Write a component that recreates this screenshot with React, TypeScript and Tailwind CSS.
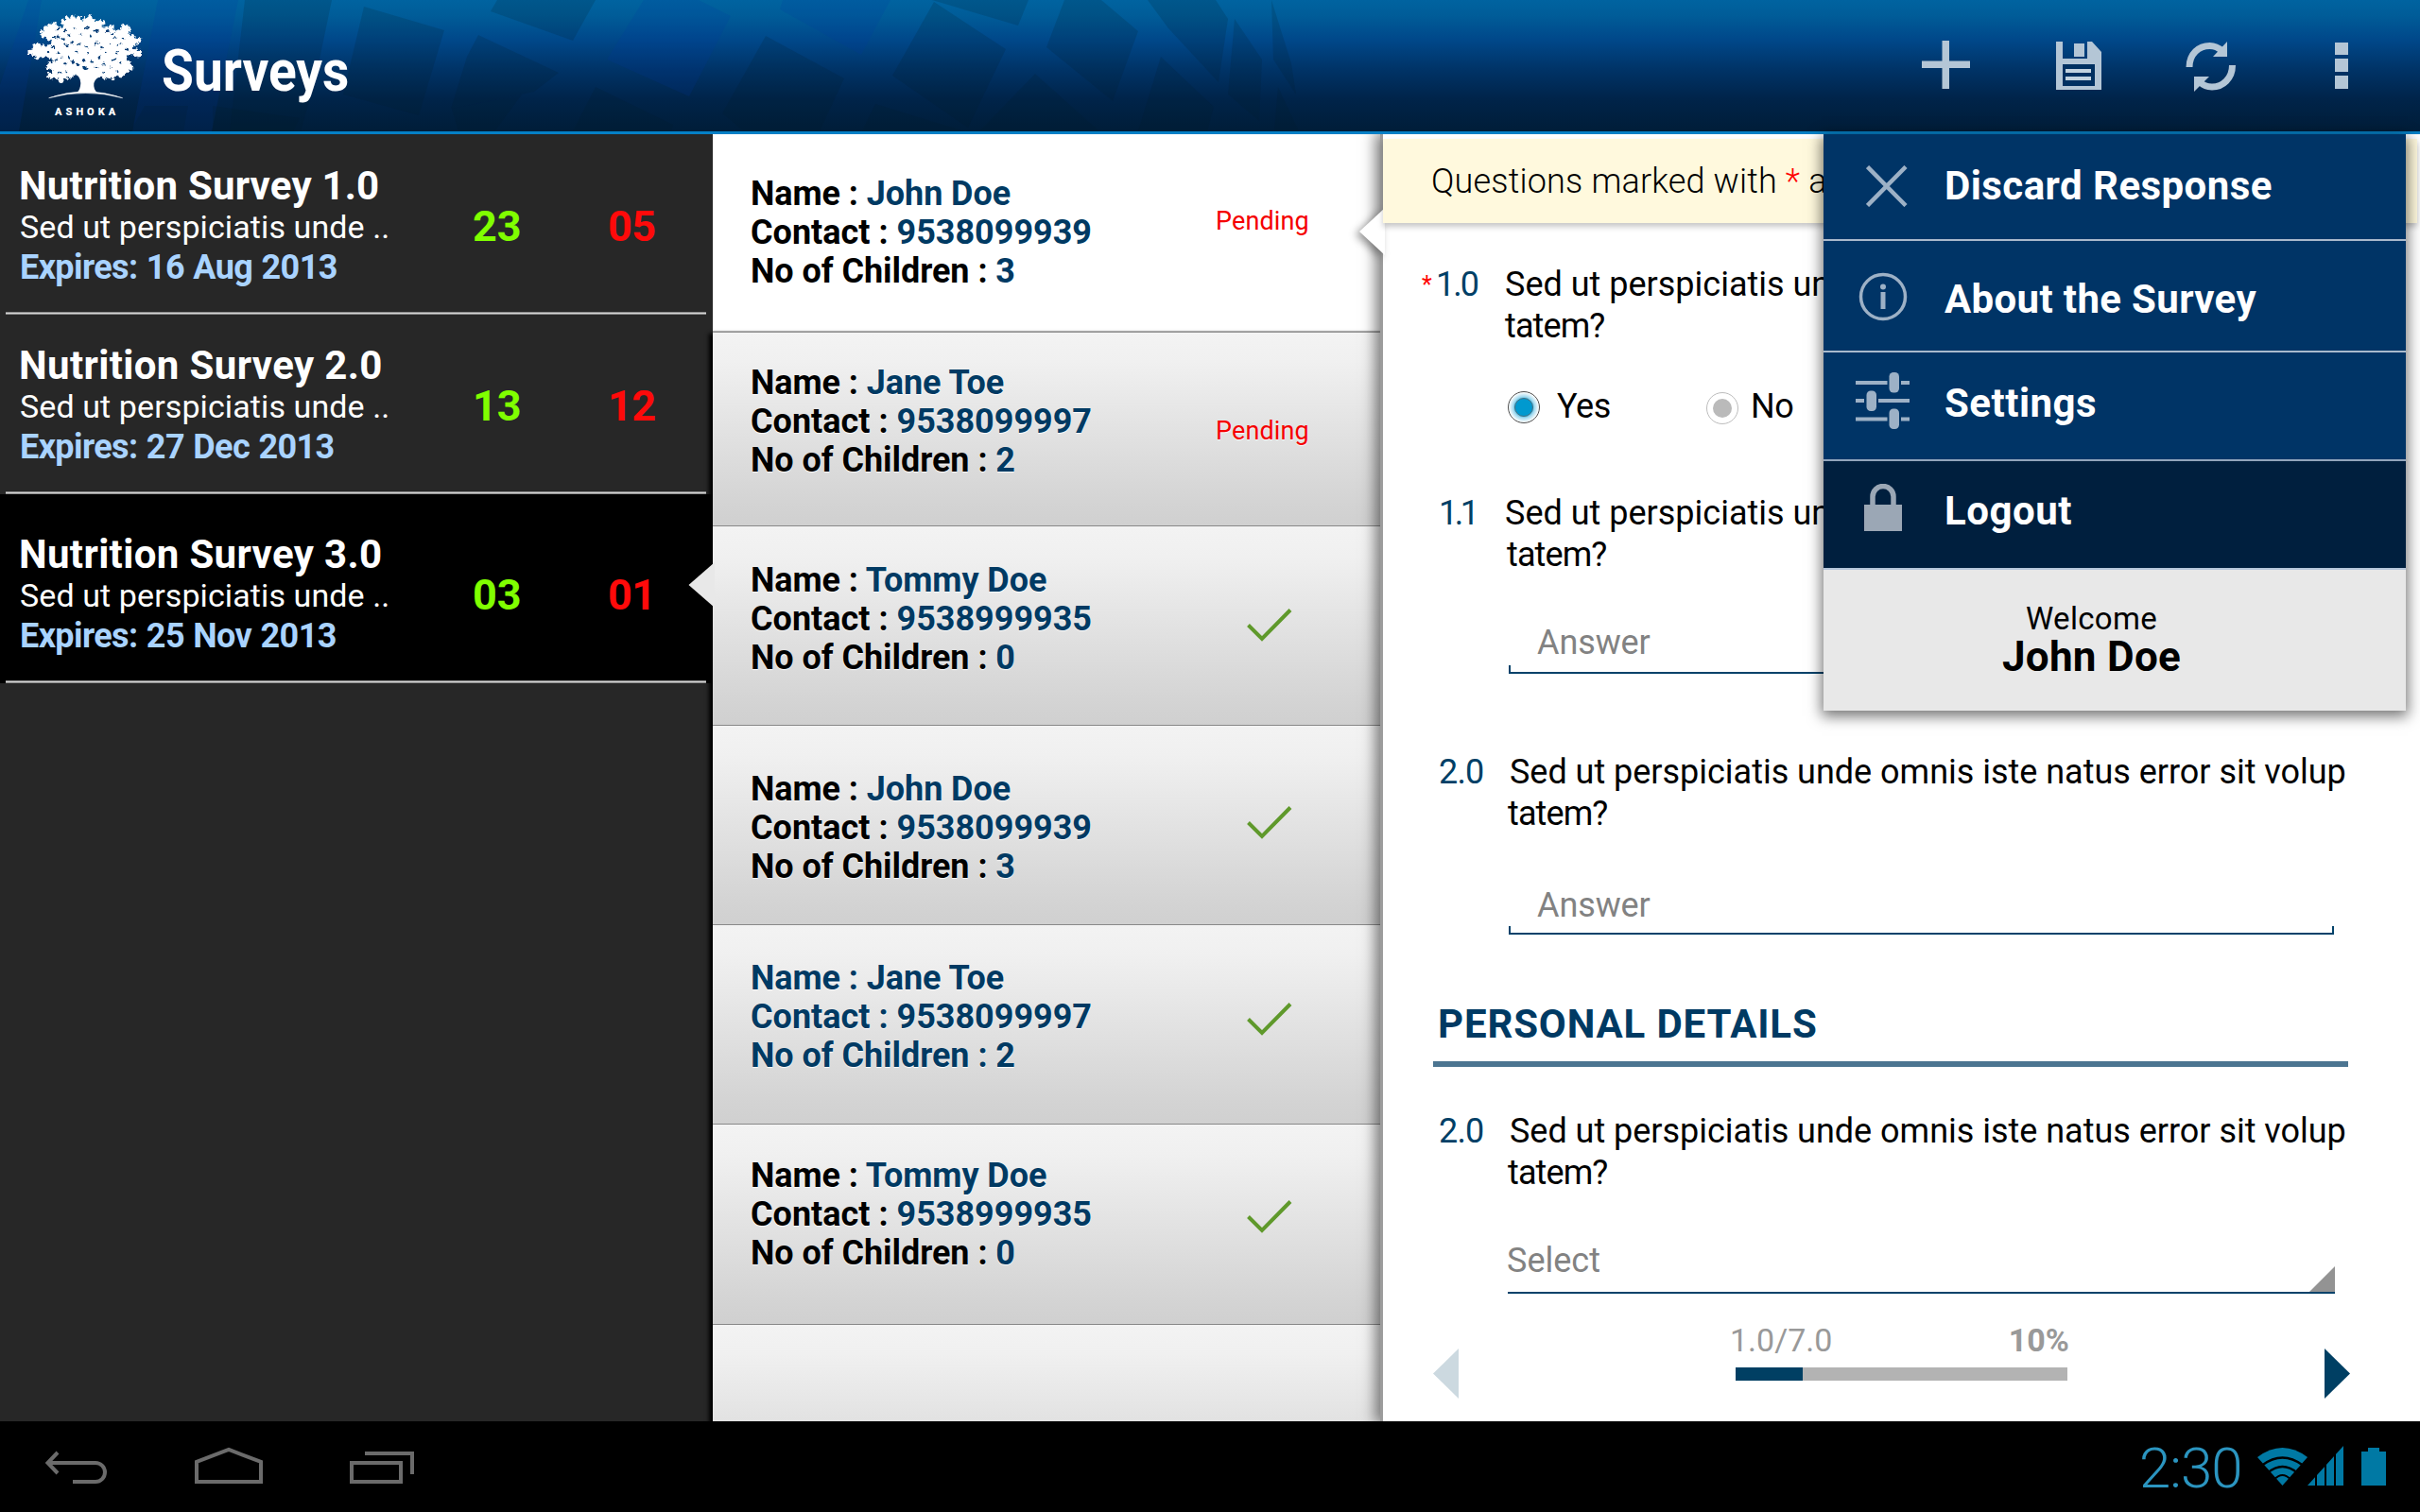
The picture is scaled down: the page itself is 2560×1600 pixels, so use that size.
import type { ReactNode } from "react";

const PATTERN_DARK = [
  "153,112 199,112 194,139 138,139",
  "225,112 317,125 310,139 225,139",
  "259,0 351,0 334,82 318,139 243,139",
  "385,7 470,32 443,122 363,100",
  "526,0 630,0 606,43 519,12",
  "506,37 591,77 565,97 477,115 494,60",
  "478,115 552,100 523,139 485,139",
  "630,92 712,132 710,139 606,139",
  "810,38 893,83 867,139 787,139 764,120",
  "988,2 1064,52 1024,135 944,80",
  "986,0 1088,0 1077,27",
  "1126,0 1165,0 1204,33 1177,107 1107,50",
  "1095,78 1163,139 1036,139",
  "1214,0 1286,0 1299,20 1289,87 1236,30",
  "1228,60 1284,113 1277,139 1204,139",
  "1306,20 1335,63 1332,128 1299,100",
  "1345,0 1366,67 1371,100 1347,63",
  "1352,92 1374,139 1348,139",
  "926,110 1020,139 912,139",
];
const PATTERN_BLUE = [
  "167,0 252,0 224,139 140,139",
  "681,0 739,0 773,17 729,102 642,63",
  "828,0 942,0 911,58 825,10",
  "30,0 44,0 20,139 0,139 0,90",
];

function Header() {
  return (
    <header className="relative flex h-[142px] shrink-0 border-b-[3px] border-[#0580c6] bg-[linear-gradient(to_bottom,#0063a0_0%,#005c98_12%,#00488a_30%,#003468_52%,#00244a_75%,#001d38_100%)]">
      <svg className="absolute left-0 top-0" width="1400" height="139" viewBox="0 0 1400 139">
        {PATTERN_BLUE.map((p) => (
          <polygon key={p} points={p} fill="#0038a0" fillOpacity="0.16" />
        ))}
        {PATTERN_DARK.map((p) => (
          <polygon key={p} points={p} fill="#00202c" fillOpacity="0.17" />
        ))}
      </svg>
      <div className="relative ml-[20px] flex w-[140px] flex-col">
        <Tree />
        <div className="-mt-[18px] pl-[38px] text-[11px] font-black leading-[14px] tracking-[4px] text-white">ASHOKA</div>
      </div>
      <h1 className="relative ml-[11px] mt-[39px] origin-left scale-x-[0.888] text-[62px] font-bold leading-[72px] text-white">Surveys</h1>
      <nav className="relative ml-auto flex pr-[76px] pt-[43px]">
        <svg width="51" height="51" viewBox="0 0 51 51" fill="#b4c6d6">
          <path d="M21.500 0h7.500v21.500h22v7.500h-22v22h-7.500v-22H0v-7.500h21.500z" />
        </svg>
        <svg className="ml-[91px]" width="48" height="53" viewBox="0 0 48 53">
          <path d="M0 1h7v18h26V1h5l10 11v40H0z" fill="#b4c6d6" />
          <path d="M19 3h11v14H19z" fill="#b4c6d6" />
          <path d="M7 25h34v23H7z" fill="#003061" />
          <path d="M10 30h27v4H10zM10 38h27v4H10z" fill="#c3d2df" />
        </svg>
        <svg className="ml-[89px]" width="53" height="54" viewBox="0 0 53 54">
          <path d="M4 28C4 14 14 5.500 25.500 5.500Q33 5.500 38.500 11" fill="none" stroke="#b4c6d6" strokeWidth="7" />
          <path d="M49.500 26C49.500 40 39.500 49 28 49Q20 49 15 43.500" fill="none" stroke="#b4c6d6" strokeWidth="7" />
          <path d="M44 1v16H29zM9 54V38h16z" fill="#b4c6d6" />
        </svg>
        <svg className="ml-[105px]" width="14" height="53" viewBox="0 0 14 53" fill="#b4c6d6">
          <path d="M0 2h14v13H0zM0 19h14v14H0zM0 37h14v14H0z" />
        </svg>
      </nav>
    </header>
  );
}

const CANOPY: [number, number][] = [
  [36, 142], [49, 120], [62, 116], [77, 126], [94, 124], [108, 110], [94, 96], [76, 90], [74, 78], [88, 74], [84, 64], [98, 58], [112, 54], [128, 64],
  [144, 62], [140, 46], [152, 34], [170, 29], [190, 34], [200, 46], [210, 36], [225, 32], [236, 42], [256, 44], [266, 50], [260, 64], [280, 65], [294, 62],
  [302, 76], [316, 76], [332, 62], [344, 60], [350, 70], [342, 84], [360, 90], [368, 100], [380, 104], [376, 110], [364, 118], [352, 126], [372, 136], [384, 140],
  [382, 149], [368, 150], [350, 146], [336, 160], [348, 174], [352, 184], [356, 192], [344, 200], [334, 210], [324, 215], [310, 214], [298, 224], [284, 216],
  [270, 224], [256, 214], [240, 212], [215, 205], [190, 206], [176, 208], [164, 218], [150, 222], [134, 232], [120, 222], [102, 222], [97, 214], [112, 204], [92, 190],
  [98, 182], [112, 172], [96, 156], [74, 152], [58, 160], [50, 150],
];
const GAPS: [number, number, number, number][] = [
  [125, 68, 8, 3], [146, 74, 4, 5], [118, 94, 12, 4], [140, 100, 7, 3], [177, 66, 5, 2], [214, 66, 9, 3], [246, 75, 8, 3], [160, 88, 3, 5], [196, 84, 4, 2], [228, 90, 3, 5],
  [280, 76, 8, 3], [298, 84, 5, 3], [306, 96, 7, 2], [330, 98, 4, 3], [108, 126, 7, 3], [124, 142, 6, 2], [152, 120, 8, 3], [168, 112, 6, 3], [190, 116, 8, 2], [214, 124, 6, 2],
  [246, 114, 9, 4], [262, 126, 5, 3], [290, 118, 4, 2], [318, 118, 8, 2], [342, 134, 7, 3], [312, 142, 6, 3], [118, 168, 6, 4], [138, 160, 5, 2], [160, 158, 4, 6], [172, 172, 6, 5],
  [148, 178, 7, 3], [188, 182, 5, 6], [210, 192, 8, 6], [232, 208, 6, 5], [230, 172, 5, 3], [206, 166, 4, 4], [256, 158, 6, 3], [270, 180, 5, 4], [246, 190, 4, 5], [300, 166, 9, 3],
  [320, 176, 6, 2], [290, 190, 4, 2], [312, 202, 5, 2], [128, 206, 7, 3], [150, 202, 4, 3], [92, 142, 5, 2], [222, 146, 3, 2], [184, 140, 4, 2], [274, 142, 4, 2], [268, 206, 3, 3],
];

function Tree() {
  return (
    <svg className="mt-[8px] shrink-0" width="140" height="122" viewBox="0 0 420 366">
      <filter id="leaves" x="-5%" y="-5%" width="110%" height="110%">
        <feTurbulence type="fractalNoise" baseFrequency="0.12" numOctaves="2" seed="4" />
        <feDisplacementMap in="SourceGraphic" scale="14" xChannelSelector="R" yChannelSelector="G" />
      </filter>
      <g filter="url(#leaves)">
        <polygon points={CANOPY.map((p) => p.join(",")).join(" ")} fill="#fff" />
        {CANOPY.map(([x, y], i) => (
          <circle key={i} cx={x} cy={y} r={i % 3 === 0 ? 8 : 6} fill="#fff" />
        ))}
        {GAPS.map(([x, y, rx, ry], i) => (
          <ellipse key={i} cx={x} cy={y} rx={rx} ry={ry} fill="#013a74" transform={`rotate(${((i * 37) % 60) - 30} ${x} ${y})`} />
        ))}
      </g>
      <path d="M168 206Q196 214 196 240Q195 262 184 270H248Q236 258 238 240Q242 222 268 216L240 200H190z" fill="#fff" />
      <path d="M95 287Q212 246 329 287Q212 256 95 287z" fill="#fff" stroke="#fff" strokeWidth="1.5" />
    </svg>
  );
}

type Survey = { title: string; expires: string; done: string; pending: string; row: string; track: string };
const SURVEYS: Survey[] = [
  { title: "Nutrition Survey 1.0", expires: "16 Aug 2013", done: "23", pending: "05", row: "h-[191px] pt-[32px]", track: "tracking-[0.2px]" },
  { title: "Nutrition Survey 2.0", expires: "27 Dec 2013", done: "13", pending: "12", row: "h-[190px] pt-[31px]", track: "tracking-[0.37px]" },
  { title: "Nutrition Survey 3.0", expires: "25 Nov 2013", done: "03", pending: "01", row: "h-[200px] pt-[41px] bg-black", track: "tracking-[0.35px]" },
];

function SurveyList() {
  return (
    <aside className="w-[754px] shrink-0 bg-[#272727]">
      {SURVEYS.map((s) => (
        <div key={s.title} className={"flex flex-col " + s.row}>
          <div className="flex flex-1 pl-[20px]">
            <div className="w-[480px]">
              <div className={"text-[42px] font-bold leading-[46px] text-white " + s.track}>{s.title}</div>
              <div className="pl-[1px] text-[34px] leading-[41px] tracking-[0.1px] text-white">Sed ut perspiciatis unde ..</div>
              <div className="pl-[1px] text-[36px] font-bold leading-[44px] tracking-[-0.6px] [word-spacing:1px] text-[#a9d3ff]">Expires: {s.expires}</div>
            </div>
            <div className="w-[143px] pt-[44px] text-[45px] font-bold leading-[44px] text-[#80ff00]">{s.done}</div>
            <div className="pt-[44px] text-[45px] font-bold leading-[44px] tracking-[-0.5px] text-[#ff0a0a]">{s.pending}</div>
          </div>
          <div className="ml-[6px] h-[3px] w-[741px] border-y border-[#8a8a8a] bg-[#d4d4d4]" />
        </div>
      ))}
    </aside>
  );
}

type Person = { name: string; contact: string; kids: string; status: "pending" | "done"; card: string; mark: string; allBlue?: boolean };
const PEOPLE: Person[] = [
  { name: "John Doe", contact: "9538099939", kids: "3", status: "pending", card: "h-[210px] pt-[43px] bg-white border-b-2 border-[#c0c0c0]", mark: "mt-[32px]" },
  { name: "Jane Toe", contact: "9538099997", kids: "2", status: "pending", card: "h-[205px] pt-[33px]", mark: "mt-[54px]" },
  { name: "Tommy Doe", contact: "9538999935", kids: "0", status: "done", card: "h-[211px] pt-[37px]", mark: "mt-[50px]" },
  { name: "John Doe", contact: "9538099939", kids: "3", status: "done", card: "h-[211px] pt-[47px]", mark: "mt-[38px]" },
  { name: "Jane Toe", contact: "9538099997", kids: "2", status: "done", card: "h-[211px] pt-[36px]", mark: "mt-[46px]", allBlue: true },
  { name: "Tommy Doe", contact: "9538999935", kids: "0", status: "done", card: "h-[212px] pt-[34px]", mark: "mt-[46px]" },
];

function PersonCard({ p, first }: { p: Person; first?: boolean }) {
  const line = "text-[36px] font-bold leading-[41px] " + (p.allBlue ? "text-[#003a63]" : "text-black");
  return (
    <div
      className={
        "flex pl-[40px] " + p.card +
        (first ? "" : " border-b border-[#888] bg-[linear-gradient(to_bottom,#f3f3f3,#f0f0f0_15%,#d3d3d3_90%,#d0d0d0)] [text-shadow:0_1px_1px_rgba(255,255,255,0.9)]")
      }
    >
      <div className="w-[492px] whitespace-nowrap">
        <div className={line + " tracking-[-0.08px]"}>Name : <span className="text-[#003a63]">{p.name}</span></div>
        <div className={line}>Contact : <span className="text-[#003a63]">{p.contact}</span></div>
        <div className={line + " tracking-[-0.06px]"}>No of Children : <span className="text-[#003a63]">{p.kids}</span></div>
      </div>
      <div className={p.mark}>
        {p.status === "pending" ? (
          <div className="text-[27px] leading-[34px] tracking-[0.1px] text-[#f50000]">Pending</div>
        ) : (
          <svg className="ml-[33px]" width="48" height="36" viewBox="0 0 48 36">
            <path d="M1.500 17.500L16 32L46 1.500" fill="none" stroke="#5f992b" strokeWidth="4" />
          </svg>
        )}
      </div>
    </div>
  );
}

function ResponseList() {
  return (
    <section className="relative flex w-[709px] shrink-0 flex-col">
      <PersonCard p={PEOPLE[0]} first />
      <div className="flex-1 shadow-[-3px_2px_4px_1px_#000]">
        {PEOPLE.slice(1).map((p, i) => (
          <PersonCard key={i} p={p} />
        ))}
        <div className="h-[102px] bg-[linear-gradient(to_bottom,#f3f3f3,#f0f0f0_30%,#e2e2e2)]" />
      </div>
      <svg className="absolute left-[-26px] top-[453px]" width="28" height="48" viewBox="0 0 28 48">
        <path d="M28 0L0.500 24L28 48z" fill="#e8e8e8" />
      </svg>
    </section>
  );
}

type QuestionProps = { no: string; noTrack: string; cols: string; first: string; second: string; top: string; required?: boolean };

function Question({ no, noTrack, cols, first, second, top, required }: QuestionProps) {
  return (
    <div className={"grid text-[36px] leading-[44px] text-black " + cols + " " + top}>
      <span className="text-[25px] leading-[46px] text-[#f00]">{required ? "*" : ""}</span>
      <span className={"text-[#003f66] " + noTrack}>{no}</span>
      <div className="whitespace-nowrap">
        <div className={first}>Sed ut perspiciatis unde omnis iste natus error sit volup</div>
        <div className={"tracking-[-0.9px] " + second}>tatem?</div>
      </div>
    </div>
  );
}

function AnswerField({ box }: { box: string }) {
  return (
    <div className={"ml-[133px] flex w-[873px] justify-between border-b-2 border-[#04426a] " + box}>
      <span className="h-[7px] w-[2px] self-end bg-[#04426a]" />
      <span className="ml-[28px] flex-1 text-[36px] leading-[44px] tracking-[-0.1px] text-[#828282]">Answer</span>
      <span className="h-[7px] w-[2px] self-end bg-[#04426a]" />
    </div>
  );
}

function SurveyForm() {
  return (
    <main className="relative flex w-[1097px] flex-col bg-white pt-[5px] shadow-[-3px_0_0_0_#9c9c9c,-6px_0_14px_2px_rgba(0,0,0,0.5)]">
      <svg className="absolute left-[-26px] top-[78px] drop-shadow-[-4px_3px_4px_rgba(0,0,0,0.4)]" width="28" height="50" viewBox="0 0 28 50">
        <path d="M28 0L1 25L28 50z" fill="#fff" />
      </svg>
      <div className="relative h-[89px] w-[1094px] bg-[#fff9dd] pl-[51px] pt-[23px] text-[36px] font-light leading-[44px] tracking-[0.17px] whitespace-nowrap text-black shadow-[0_4px_6px_rgba(0,0,0,0.22)]">
        Questions marked with <span className="text-[#f00]">*</span> are mandatory
      </div>
      <Question no="1.0" required noTrack="tracking-[-2px]" top="mt-[43px] ml-[41px]" cols="grid-cols-[15px_73px_1fr]" first="" second="ml-[0px]" />
      <div className="ml-[132px] mt-[41px] flex h-[44px] items-start text-[36px] leading-[44px] tracking-[-0.4px] text-black">
        <span className="mt-[6px] flex size-[34px] items-center justify-center rounded-full border border-[#4d4d4d] bg-[radial-gradient(closest-side,#4dbbe0_58%,#a9dcf0_72%,#e8f6fb_92%,#fff_100%)]">
          <span className="size-[20px] rounded-full border border-[#4a6f80] bg-[#0099cf]" />
        </span>
        <span className="ml-[18px] w-[192px]">Yes</span>
        <span className="ml-[-34px] mt-[7px] flex size-[34px] items-center justify-center rounded-full border border-[#bdbdbd]">
          <span className="size-[20px] rounded-full bg-[#bababa]" />
        </span>
        <span className="ml-[13px]">No</span>
      </div>
      <Question no="1.1" noTrack="tracking-[-3.5px]" top="mt-[69px] ml-[41px]" cols="grid-cols-[18px_70px_1fr]" first="" second="ml-[2px]" />
      <AnswerField box="mt-[49px] h-[55px]" />
      <Question no="2.0" noTrack="tracking-[-0.8px]" top="mt-[82px] ml-[41px]" cols="grid-cols-[18px_75px_1fr]" first="tracking-[-0.02px]" second="ml-[-2px]" />
      <AnswerField box="mt-[53px] h-[53px]" />
      <h2 className="ml-[58px] mt-[70px] text-[42px] font-bold leading-[50px] tracking-[0.85px] text-[#003a63]">PERSONAL DETAILS</h2>
      <div className="ml-[53px] mt-[14px] h-[6px] w-[968px] bg-[#4c7591]" />
      <Question no="2.0" noTrack="tracking-[-0.8px]" top="mt-[46px] ml-[41px]" cols="grid-cols-[18px_75px_1fr]" first="tracking-[-0.02px]" second="ml-[-2px]" />
      <div className="ml-[132px] mt-[49px] flex h-[57px] w-[875px] items-end justify-between border-b-2 border-[#04426a]">
        <span className="ml-[-1px] self-start text-[36px] leading-[44px] text-[#828282]">Select</span>
        <svg width="27" height="27" viewBox="0 0 27 27"><path d="M27 0V27H0z" fill="#939393" /></svg>
      </div>
      <div className="ml-[53px] mt-[29px] flex w-[970px] items-start">
        <svg className="mt-[29px]" width="27" height="53" viewBox="0 0 27 53"><path d="M27 0V53L0 26.500z" fill="#ccd9e0" /></svg>
        <div className="ml-[293px] w-[351px]">
          <div className="ml-[-6px] mr-[-2px] flex justify-between text-[34px] leading-[40px] text-[#999]">
            <span>1.0/7.0</span>
            <span className="font-bold">10%</span>
          </div>
          <div className="mt-[9px] flex h-[14px] bg-[#b3b3b3]">
            <div className="w-[71px] bg-[#003f63]" />
          </div>
        </div>
        <svg className="ml-auto mt-[29px]" width="27" height="53" viewBox="0 0 27 53"><path d="M0 0V53L27 26.500z" fill="#003f63" /></svg>
      </div>
    </main>
  );
}

function MenuItem({ icon, label, row, track }: { icon: ReactNode; label: string; row: string; track: string }) {
  return (
    <div className={"flex items-start " + row}>
      <span className="flex h-[50px] w-[127px] shrink-0 items-center">{icon}</span>
      <span className={"text-[42px] font-bold leading-[50px] whitespace-nowrap text-white " + track}>{label}</span>
    </div>
  );
}

function OverflowMenu() {
  return (
    <div className="absolute left-[1929px] top-[142px] flex h-[610px] w-[616px] flex-col bg-[#e8e8e8] shadow-[0_4px_14px_2px_rgba(0,0,0,0.55)]">
      <MenuItem
        label="Discard Response"
        track="tracking-[0.45px]"
        row="h-[113px] pl-[1px] border-b-2 border-[#a9b9cc] bg-[#003466] pt-[30px]"
        icon={<svg className="ml-[44px]" width="44" height="44" viewBox="0 0 44 44"><path d="M1.500 1.500L42 42.500M42 1.500L1.500 42.500" stroke="#9db1c6" strokeWidth="4.500" /></svg>}
      />
      <MenuItem
        label="About the Survey"
        track="tracking-[0.35px]"
        row="h-[118px] pl-[1px] border-b-2 border-[#a9b9cc] bg-[#003466] pt-[37px]"
        icon={
          <svg className="ml-[36px] mt-[-7px]" width="52" height="52" viewBox="0 0 52 52">
            <circle cx="26" cy="26" r="23.500" fill="none" stroke="#9db1c6" strokeWidth="3.500" />
            <circle cx="26" cy="15.500" r="3" fill="#9db1c6" />
            <path d="M23.500 21h5v18h-5z" fill="#9db1c6" />
          </svg>
        }
      />
      <MenuItem
        label="Settings"
        track="tracking-[0.5px]"
        row="h-[115px] pl-[1px] border-b-2 border-[#91a5bc] bg-[#003466] pt-[29px]"
        icon={
          <svg className="ml-[33px] mt-[-7px]" width="57" height="60" viewBox="0 0 57 60" fill="#9db1c6">
            <path d="M0 9h33.500v4H0zM48 9h9v4h-9zM0 28h9v4H0zM24 28h33v4H24zM0 47.500h33.500v4H0zM48 47.500h9v4h-9z" />
            <rect x="35.500" y="0" width="10.500" height="21.500" rx="4.500" />
            <rect x="11.500" y="19.500" width="10.500" height="21.500" rx="4.500" />
            <rect x="35.500" y="38.500" width="10.500" height="21.500" rx="4.500" />
          </svg>
        }
      />
      <MenuItem
        label="Logout"
        track="tracking-[0.5px]"
        row="pl-[1px] h-[115px] border-b-2 border-[#b6c6da] bg-[#001f3e] pt-[28px]"
        icon={
          <svg className="ml-[42px] mt-[-9px]" width="40" height="50" viewBox="0 0 40 50">
            <path d="M0 22h40v28H0z" fill="#9ba7b5" />
            <path d="M9 24V13.500A11 11 0 0 1 31 13.500V24" fill="none" stroke="#9ba7b5" strokeWidth="5.500" />
          </svg>
        }
      />
      <div className="flex flex-1 flex-col items-center pr-[49px] pt-[32px] text-black">
        <div className="text-[33px] leading-[40px] tracking-[0.3px]">Welcome</div>
        <div className="mt-[-2px] text-[44px] font-bold leading-[44px] tracking-[0.3px]">John Doe</div>
      </div>
    </div>
  );
}

function SystemBar() {
  return (
    <footer className="flex h-[96px] shrink-0 items-start justify-between bg-black">
      <div className="flex pl-[47px] pt-[26px]">
        <svg width="68" height="44" viewBox="0 0 68 44" fill="none" stroke="#6b6b6b" strokeWidth="4">
          <path d="M14 7L3.500 18L14 29M4 18H54A10 10 0 0 1 54 38H30" />
        </svg>
        <svg className="ml-[91px]" width="72" height="44" viewBox="0 0 72 44" fill="none" stroke="#6b6b6b" strokeWidth="4">
          <path d="M2 38V17L36 4L70 17V38z" />
        </svg>
        <svg className="ml-[92px]" width="68" height="44" viewBox="0 0 68 44" fill="none" stroke="#6b6b6b" strokeWidth="4">
          <path d="M2 18H54V38H2zM16 8H66V30" />
        </svg>
      </div>
      <div className="flex pr-[36px] pt-[26px]">
        <span className="mt-[-11px] w-[125px] text-[60px] font-light leading-[70px] tracking-[-1px] text-[#2b95c0]">2:30</span>
        <svg width="53" height="42" viewBox="0 0 53 42">
          <path d="M26.500 42L0 12Q26.500 -8 53 12z" fill="#0079a4" />
          <path d="M5 20.500Q26.500 4.500 48 20.500M11 28.500Q26.500 15.500 42 28.500M18 35.500Q26.500 26.500 35 35.500" fill="none" stroke="#000" strokeWidth="2.200" />
        </svg>
        <svg width="38" height="42" viewBox="0 0 38 42">
          <path d="M0 42L38 0V42z" fill="#0079a4" />
          <path d="M8 0h2v42H8zM18 0h2v42h-2zM28 0h2v42h-2z" fill="#000" />
        </svg>
        <svg className="ml-[19px] mt-[2px]" width="26" height="40" viewBox="0 0 26 40">
          <path d="M7 0H19V4H26V40H0V4H7z" fill="#0079a4" />
        </svg>
      </div>
    </footer>
  );
}

export default function App() {
  return (
    <div className="relative flex h-[1600px] w-[2560px] flex-col overflow-hidden bg-black font-['Roboto',sans-serif]">
      <Header />
      <div className="flex h-[1362px] overflow-hidden">
        <SurveyList />
        <ResponseList />
        <SurveyForm />
      </div>
      <SystemBar />
      <OverflowMenu />
    </div>
  );
}
